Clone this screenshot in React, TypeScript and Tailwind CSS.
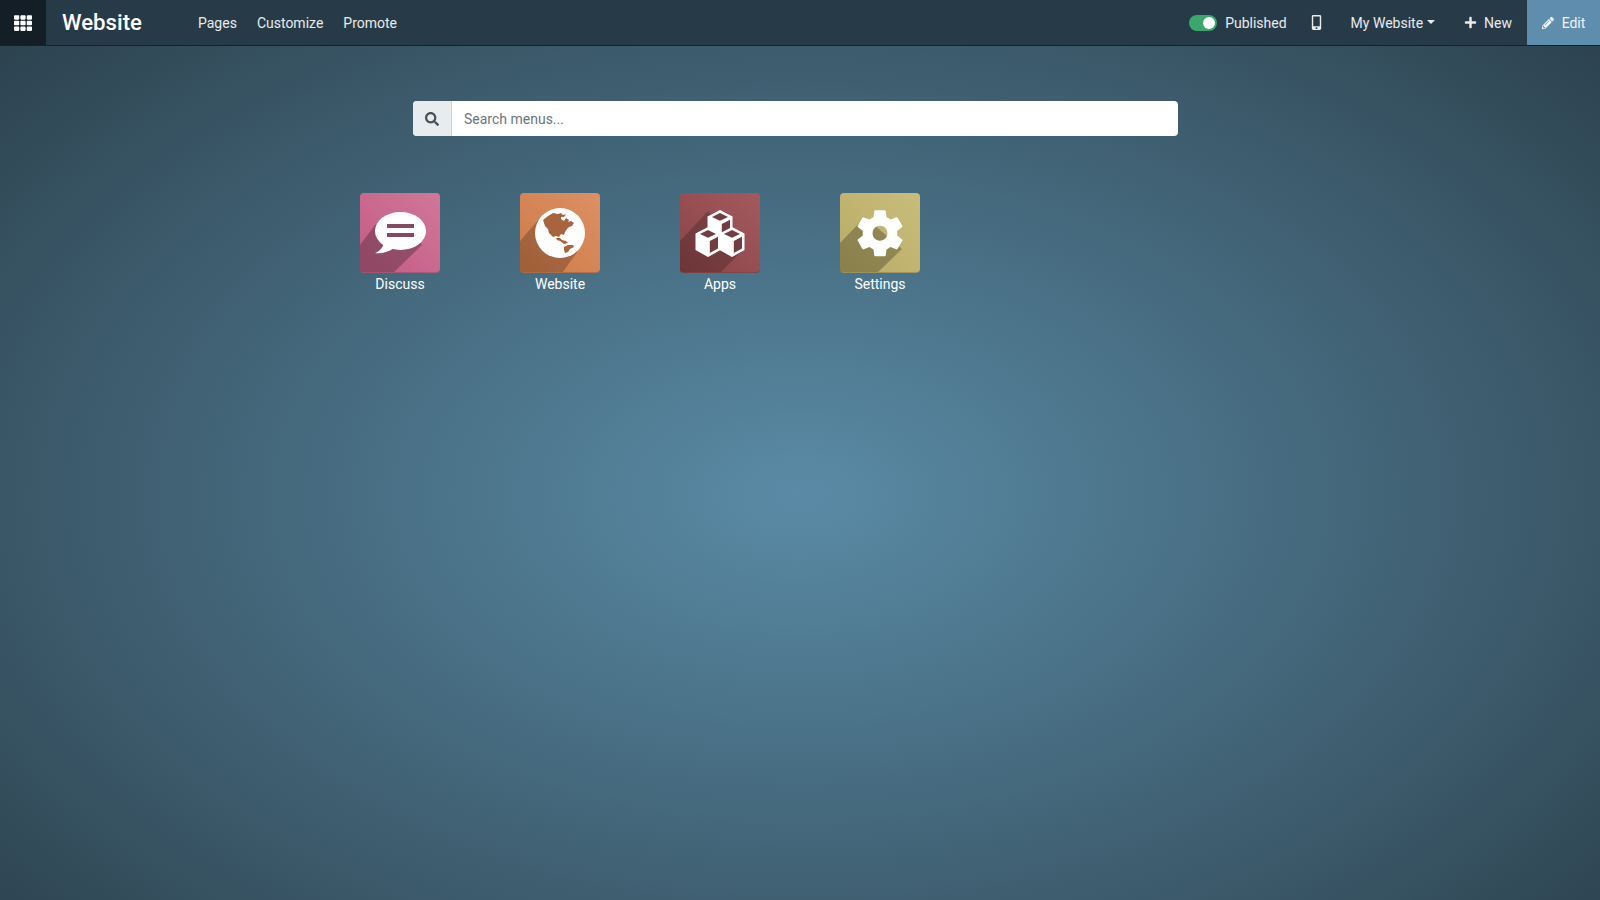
import React from 'react';
import { FaTh, FaSearch, FaMobileAlt, FaPlus, FaPencilAlt } from 'react-icons/fa';

const Cube = ({ x, y, fill }: { x: number; y: number; fill: string }) => (
  <g transform={`translate(${x} ${y})`}>
    <polygon points="0,-16 12.5,-9.5 12.5,7 0,14 -12.5,7 -12.5,-9.5" fill="#fff" />
    <polygon points="0,-13 8,-9 0,-5.2 -8,-9" fill={fill} />
    <polygon points="1.8,-2 10,-6.2 10,5.4 1.8,10" fill={fill} />
  </g>
);

const DiscussIcon = () => (
  <>
    <polygon points="0,52 15,32 40,20 62,52 33,80 0,80" fill="#4a2a38" fillOpacity="0.42" />
    <ellipse cx="40.5" cy="38" rx="25.5" ry="19" fill="#fff" />
    <path d="M24 50 C23 54 20 58 15 60 C21 61 29 59 34 55 Z" fill="#fff" />
    <rect x="27" y="31" width="27" height="4" fill="#834a62" />
    <rect x="27" y="40" width="27" height="4" fill="#834a62" />
  </>
);

const WebsiteIcon = () => (
  <>
    <polygon points="0,48 20,25 58,58 42,80 0,80" fill="#000" fillOpacity="0.22" />
    <circle cx="40" cy="40" r="25" fill="#fff" />
    <path d="M23 27 L28 23 L33 20 L38 21 L41 20 L43 22 L46 21 L44 24 L41 24 L41 26 L44 28 L46 25 L49 27 L48 29 L51 28 L54 30 L52 33 L49 34 L47 36 L45 39 L44 42 L41 41 L39 44 L36 43 L33 44 L29 40 L28 36 L25 33 Z" fill="#a8653d" />
    <path d="M36 45 L40 45 L42 47 L46 48 L48 50 L44 51 L40 48 L37 47 Z" fill="#a8653d" />
    <path d="M44 54 L48 52 L53 52 L54 54 L50 56 L48 59 L45 60 L44 57 Z" fill="#a8653d" />
  </>
);

const AppsIcon = () => (
  <>
    <polygon points="0,48 28,18 64,56 40,80 0,80" fill="#000" fillOpacity="0.2" />
    <Cube x={40} y={33} fill="#743c41" />
    <Cube x={28} y={50} fill="#743c41" />
    <Cube x={52} y={50} fill="#743c41" />
  </>
);

const SettingsIcon = () => (
  <>
    <polygon points="0,50 25,24 62,56 37,80 0,80" fill="#000" fillOpacity="0.25" />
    <g transform="translate(11.2 11.5) scale(2.4)">
      <path
        fill="#fff"
        fillRule="evenodd"
        d="M19.14 12.94c.04-.3.06-.61.06-.94 0-.32-.02-.64-.07-.94l2.03-1.58c.18-.14.23-.41.12-.61l-1.92-3.32c-.12-.22-.37-.29-.59-.22l-2.39.96c-.5-.38-1.03-.7-1.62-.94l-.36-2.54c-.04-.24-.24-.41-.48-.41h-3.84c-.24 0-.43.17-.47.41l-.36 2.54c-.59.24-1.13.57-1.62.94l-2.39-.96c-.22-.08-.47 0-.59.22L2.74 8.87c-.12.21-.08.47.12.61l2.03 1.58c-.05.3-.09.63-.09.94s.02.64.07.94l-2.03 1.58c-.18.14-.23.41-.12.61l1.92 3.32c.12.22.37.29.59.22l2.39-.96c.5.38 1.03.7 1.62.94l.36 2.54c.05.24.24.41.48.41h3.84c.24 0 .44-.17.47-.41l.36-2.54c.59-.24 1.13-.56 1.62-.94l2.39.96c.22.08.47 0 .59-.22l1.92-3.32c.12-.22.07-.47-.12-.61l-2.01-1.58zM12 15.1c-1.71 0-3.1-1.39-3.1-3.1s1.39-3.1 3.1-3.1 3.1 1.39 3.1 3.1-1.39 3.1-3.1 3.1z"
      />
    </g>
  </>
);

const apps = [
  { name: 'Discuss', bg: 'bg-gradient-to-tr from-[#c45a82] to-[#d0779a]', Icon: DiscussIcon },
  { name: 'Website', bg: 'bg-gradient-to-tr from-[#cf7a47] to-[#dc9064]', Icon: WebsiteIcon },
  { name: 'Apps', bg: 'bg-gradient-to-tr from-[#8a4347] to-[#a35a5e]', Icon: AppsIcon },
  { name: 'Settings', bg: 'bg-gradient-to-tr from-[#b8ab64] to-[#c9bd7c]', Icon: SettingsIcon },
];

export default function App() {
  return (
    <div className="h-[900px] w-full overflow-hidden flex flex-col font-['Roboto',sans-serif] text-white bg-[radial-gradient(ellipse_at_50%_55%,#5a8ba6_0%,#4b7389_32%,#3c5a6b_66%,#2a3f4b_100%)]">
      <header className="h-[46px] flex items-center bg-[#273a47] border-b border-[#16222b] text-sm text-white/90">
        <button className="w-[46px] h-full flex items-center justify-center bg-[#141e26] text-white">
          <FaTh size={18} />
        </button>
        <span className="ml-4 w-[136px] text-[22.2px] font-medium text-white">Website</span>
        <nav className="flex gap-5">
          <a>Pages</a>
          <a>Customize</a>
          <a>Promote</a>
        </nav>
        <div className="ml-auto flex items-center h-full">
          <div className="w-7 h-4 rounded-full bg-[#3aa76d] flex items-center justify-end px-0.5">
            <span className="w-3 h-3 rounded-full bg-white" />
          </div>
          <span className="ml-[8px]">Published</span>
          <FaMobileAlt className="ml-[22px]" size={15} />
          <span className="ml-[27px] flex items-center">
            My Website
            <span className="ml-1 mt-[-2px] border-x-[4px] border-x-transparent border-t-[4px] border-t-white/90" />
          </span>
          <span className="ml-[29px] flex items-center gap-[7px]">
            <FaPlus size={13} />
            New
          </span>
          <button className="ml-[15px] h-full w-[73px] flex items-center justify-center gap-2 bg-[#5f8dad]">
            <FaPencilAlt size={12} />
            Edit
          </button>
        </div>
      </header>

      <main className="w-[960px] mx-auto">
        <div className="mt-[55px] ml-[93px] w-[765px] h-[35px] flex rounded bg-white overflow-hidden text-sm">
          <div className="w-[39px] flex items-center justify-center bg-[#e9ecef] border-r border-[#ced4da] text-[#495057]">
            <FaSearch size={14} />
          </div>
          <input
            className="flex-1 px-3 outline-none text-[#495057] placeholder:text-[#6c757d]"
            placeholder="Search menus..."
          />
        </div>

        <div className="mt-[57px] grid grid-cols-6">
          {apps.map(({ name, bg, Icon }) => (
            <div key={name} className="flex flex-col items-center">
              <div className={`w-20 h-20 rounded overflow-hidden border-b border-black/20 ${bg}`}>
                <svg viewBox="0 0 80 80" width="80" height="80">
                  <Icon />
                </svg>
              </div>
              <span className="mt-px text-sm leading-5">{name}</span>
            </div>
          ))}
        </div>
      </main>
    </div>
  );
}
